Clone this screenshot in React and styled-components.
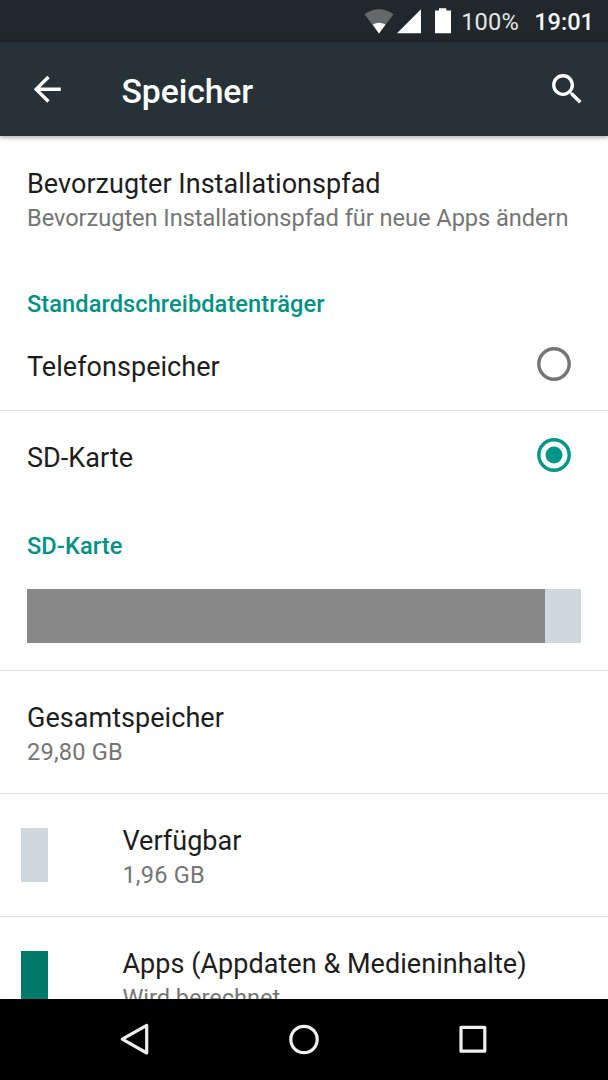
import { styled, createGlobalStyle } from "styled-components";

const GlobalStyle = createGlobalStyle`
  * {
    box-sizing: border-box;
  }
  body {
    margin: 0;
    background: #fff;
    font-family: Roboto, "Liberation Sans", sans-serif;
  }
`;

const Screen = styled.div`
  width: 608px;
  height: 1080px;
  display: flex;
  flex-direction: column;
  overflow: hidden;
  background: #fff;
`;

const StatusBar = styled.div`
  flex: none;
  height: 42px;
  display: flex;
  align-items: center;
  justify-content: flex-end;
  padding: 2px 14px 0 0;
  background: #22272b;
  color: #f4f6f7;
  font-size: 23.6px;
  line-height: 28px;
`;

const StatusIcons = styled.svg`
  display: block;
  width: 88px;
  height: 26px;
  margin: -2px 9px 0 0;
`;

const Battery = styled.span`
  width: 58px;
  color: #e4e7e8;
  letter-spacing: 0.2px;
`;

const Clock = styled.span`
  margin-left: 15px;
  font-weight: 500;
`;

const Toolbar = styled.header`
  flex: none;
  height: 94px;
  display: flex;
  align-items: center;
  padding: 1px 20.6px 0 27px;
  background: #263238;
  color: #fff;
  box-shadow: 0 1px 5px rgba(40, 20, 30, 0.45);
  z-index: 1;
`;

const Icon = styled.svg`
  display: block;
  flex: none;
  width: 40.5px;
  height: 40.5px;
  fill: currentColor;
`;

const Title = styled.h1`
  flex: 1;
  margin: 4px 0 0 54px;
  font-size: 33.75px;
  line-height: 40px;
  font-weight: 500;
  letter-spacing: -0.1px;
`;

const Content = styled.main`
  flex: 1;
  min-height: 0;
  padding-top: 1px;
  overflow: hidden;
`;

const Row = styled.div`
  height: ${(props) => (props.$single ? 91 : 123)}px;
  display: flex;
  align-items: center;
  padding: ${(props) => (props.$single ? 3 : 4)}px 27px 0;
  border-bottom: 1px solid ${(props) => (props.$last ? "transparent" : "#dfdfdf")};
`;

const Texts = styled.div`
  flex: 1;
  white-space: nowrap;
`;

const Label = styled.div`
  color: #1d1d1d;
  font-size: 27px;
  line-height: 36px;
  letter-spacing: 0.04px;
`;

const Summary = styled.div`
  color: #757575;
  font-size: 23.6px;
  line-height: 32px;
  letter-spacing: ${(props) => (props.$size ? 0.2 : -0.04)}px;
`;

const SectionTitle = styled.h2`
  margin: 0;
  height: 60px;
  padding: 30px 27px 0;
  color: #009182;
  font-size: 23.6px;
  line-height: 28px;
  font-weight: 500;
  letter-spacing: 0.08px;
`;

const RadioIcon = styled.svg`
  display: block;
  flex: none;
  width: 34px;
  height: 34px;
  margin: -5px 10px 0 0;
  color: ${(props) => (props.$checked ? "#009688" : "#757575")};
`;

const Usage = styled.div`
  padding: 27px;
  border-bottom: 1px solid #dfdfdf;
`;

const UsageBar = styled.div`
  height: 54px;
  background: #cfd8dc;
`;

const UsageFill = styled.div`
  height: 100%;
  background: #888;
`;

const Swatch = styled.span`
  flex: none;
  width: 27px;
  height: 54px;
  margin: -4px 74.4px 0 -6px;
  background: ${(props) => props.$color};
`;

const NavBar = styled.nav`
  flex: none;
  height: 81px;
  display: flex;
  align-items: center;
  justify-content: center;
  gap: 128.5px;
  background: #000;
`;

const NavIcon = styled.svg`
  display: block;
  width: 40px;
  height: 40px;
  fill: none;
  stroke: #efefef;
  stroke-width: 3.2;
  stroke-linejoin: round;
`;

const total = 29.8;
const free = 1.96;

const Radio = ({ checked }) => (
  <RadioIcon viewBox="0 0 34 34" $checked={checked}>
    <circle cx="17" cy="17" r="15.2" fill="none" stroke="currentColor" strokeWidth="3.4" />
    {checked && <circle cx="17" cy="17" r="8.5" fill="currentColor" />}
  </RadioIcon>
);

const App = () => {
  return (
    <Screen>
      <GlobalStyle />
      <StatusBar>
        <StatusIcons viewBox="0 0 88 26">
          <path d="M0.5 6.2Q15 -3.6 29.6 6.2L15 25.4Z" fill="#66696c" />
          <path d="M8.6 16.6Q15 12.8 21.5 16.6L15 25.4Z" fill="#fff" />
          <path d="M33 25.2L57 1.2V25.2Z" fill="#fff" />
          <path d="M75 0.2H82.3V2.6H87V25.2H71V2.6H75Z" fill="#fff" />
        </StatusIcons>
        <Battery>100%</Battery>
        <Clock>19:01</Clock>
      </StatusBar>
      <Toolbar>
        <Icon viewBox="0 0 24 24">
          <path d="M20 11H7.83l5.59-5.59L12 4l-8 8 8 8 1.41-1.41L7.83 13H20v-2z" />
        </Icon>
        <Title>Speicher</Title>
        <Icon viewBox="0 0 24 24">
          <path d="M15.5 14h-.79l-.28-.27C15.41 12.59 16 11.11 16 9.5 16 5.91 13.09 3 9.5 3S3 5.91 3 9.5 5.91 16 9.5 16c1.61 0 3.09-.59 4.23-1.57l.27.28v.79l5 4.99L20.49 19l-4.99-5zm-6 0C7.01 14 5 11.99 5 9.5S7.01 5 9.5 5 14 7.01 14 9.5 11.99 14 9.5 14z" />
        </Icon>
      </Toolbar>
      <Content>
        <Row $last>
          <Texts>
            <Label>Bevorzugter Installationspfad</Label>
            <Summary>Bevorzugten Installationspfad für neue Apps ändern</Summary>
          </Texts>
        </Row>
        <SectionTitle>Standardschreibdatenträger</SectionTitle>
        <Row $single>
          <Texts>
            <Label>Telefonspeicher</Label>
          </Texts>
          <Radio />
        </Row>
        <Row $single $last>
          <Texts>
            <Label>SD-Karte</Label>
          </Texts>
          <Radio checked />
        </Row>
        <SectionTitle>SD-Karte</SectionTitle>
        <Usage>
          <UsageBar>
            <UsageFill style={{ width: `${((total - free) / total) * 100}%` }} />
          </UsageBar>
        </Usage>
        <Row>
          <Texts>
            <Label>Gesamtspeicher</Label>
            <Summary $size>29,80 GB</Summary>
          </Texts>
        </Row>
        <Row>
          <Swatch $color="#cfd8dc" />
          <Texts>
            <Label>Verfügbar</Label>
            <Summary $size>1,96 GB</Summary>
          </Texts>
        </Row>
        <Row>
          <Swatch $color="#00796b" />
          <Texts>
            <Label>Apps (Appdaten &amp; Medieninhalte)</Label>
            <Summary>Wird berechnet…</Summary>
          </Texts>
        </Row>
      </Content>
      <NavBar>
        <NavIcon viewBox="0 0 40 40">
          <path d="M6.3 19.2L30.7 5.4V33Z" />
        </NavIcon>
        <NavIcon viewBox="0 0 40 40">
          <circle cx="20" cy="19.5" r="13.2" />
        </NavIcon>
        <NavIcon viewBox="0 0 40 40">
          <rect x="8" y="7.4" width="23.8" height="23.8" />
        </NavIcon>
      </NavBar>
    </Screen>
  );
};

export default App;
